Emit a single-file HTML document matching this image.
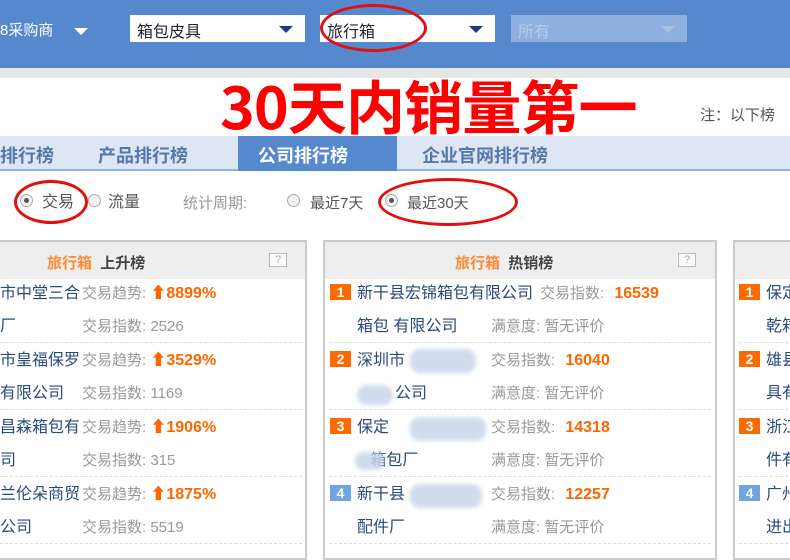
<!DOCTYPE html>
<html><head><meta charset="utf-8"><style>
*{margin:0;padding:0;box-sizing:border-box}
body{width:790px;height:547px;overflow:hidden;background:#fff;position:relative;font-family:"Liberation Sans","Noto Sans CJK SC",sans-serif;font-size:15px}
.a{position:absolute;white-space:nowrap}
.top{left:0;top:0;width:790px;height:68px;background:#5588cc}
.sel{height:27px;top:15px;background:#fff;color:#223;font-size:16px;padding:3px 0 0 7px}
.tri{position:absolute;right:12px;top:11px;border-left:7px solid transparent;border-right:7px solid transparent;border-top:7px solid #1a3a8a}
.ell{position:absolute;border:3px solid #e01010;border-radius:50%}
.rad{position:absolute;width:13px;height:13px;border:1px solid #aaa;border-radius:50%;background:#f2f2f2}
.rad.on:after{content:"";position:absolute;left:3px;top:3px;width:5px;height:5px;border-radius:50%;background:#555}
.panel{border:2px solid #ccc;top:240px;height:320px;background:#fff}
.ph{position:absolute;left:0;right:0;top:0;height:37px;background:#eee}
.q{position:absolute;width:18px;height:14px;border:1px solid #bbb;background:#fafafa;color:#aaa;font-size:11px;text-align:center;line-height:12px}
.dl{position:absolute;height:0;border-top:1px dashed #ddd}
.bl{color:#2a4a7a}.gr{color:#999}.or{color:#ff6600;font-weight:bold}
.bd{position:absolute;width:21px;height:16px;background:#ff6a00;color:#fff;font-weight:bold;font-size:14px;text-align:center;line-height:16px}
.bd.b{background:#6fa6e0}
.blur{position:absolute;background:#c8d6e8;border-radius:10px;opacity:.85;filter:blur(2px)}
</style></head><body>
<div class="a top"></div>
<div class="a" style="left:0;top:19px;color:#fff;font-size:15px">8采购商</div>
<div class="a" style="left:74px;top:28px;border-left:7px solid transparent;border-right:7px solid transparent;border-top:7px solid #fff"></div>
<div class="a sel" style="left:130px;width:175px">箱包皮具<div class="tri"></div></div>
<div class="a sel" style="left:320px;width:175px">旅行箱<div class="tri"></div></div>
<div class="a sel" style="left:511px;width:176px;background:#8fb0de;color:#b8cbe6">所有<div class="tri" style="border-top-color:#aac0e0"></div></div>
<div class="ell" style="left:320px;top:4px;width:107px;height:48px"></div>
<div class="a" style="left:0;top:68px;width:790px;height:10px;background:#e6e6e6"></div>
<div class="a" style="left:220px;top:74px;color:#ff0000;font-size:58px;line-height:60px;font-weight:bold;letter-spacing:-1px;font-family:'Noto Sans CJK SC','Liberation Sans',sans-serif;transform:scaleX(1.02);transform-origin:left top">30天内销量第一</div>
<div class="a" style="left:700px;top:104px;color:#555;font-size:15px">注：以下榜</div>
<div class="a" style="left:0;top:136px;width:790px;height:35px;background:#dde7f3;border-bottom:2px solid #8fb4df"></div>
<div class="a" style="left:238px;top:136px;width:159px;height:35px;background:#5588cc"></div>
<div class="a" style="left:0;top:142px;font-size:18px;font-weight:bold;color:#5577aa">排行榜</div>
<div class="a" style="left:98px;top:142px;font-size:18px;font-weight:bold;color:#5577aa">产品排行榜</div>
<div class="a" style="left:258px;top:142px;font-size:18px;font-weight:bold;color:#fff">公司排行榜</div>
<div class="a" style="left:422px;top:142px;font-size:18px;font-weight:bold;color:#5577aa">企业官网排行榜</div>
<span class="rad on" style="left:20px;top:194px"></span>
<div class="a" style="left:42px;top:188px;color:#555;font-size:16px">交易</div>
<span class="rad" style="left:88px;top:194px"></span>
<div class="a" style="left:108px;top:188px;color:#555;font-size:16px">流量</div>
<div class="a" style="left:183px;top:192px;color:#999">统计周期:</div>
<span class="rad" style="left:287px;top:194px"></span>
<div class="a" style="left:310px;top:192px;color:#555">最近7天</div>
<span class="rad on" style="left:385px;top:194px"></span>
<div class="a" style="left:407px;top:192px;color:#555">最近30天</div>
<div class="ell" style="left:14px;top:180px;width:74px;height:44px"></div>
<div class="ell" style="left:378px;top:178px;width:140px;height:48px"></div>

<div class="a panel" style="left:-10px;width:317px">
<div class="ph"></div>
<div class="a" style="left:55px;top:10px;font-weight:bold"><span style="color:#ff8833">旅行箱</span> <span style="color:#444;margin-left:4px">上升榜</span></div>
<div class="q" style="left:277px;top:11px">?</div>
</div>
<div class="a" style="left:0;top:277px;line-height:33px;font-size:16px">
<div class="bl">市中堂三合</div><div class="bl">厂</div>
<div class="bl" style="margin-top:1px">市皇福保罗</div><div class="bl">有限公司</div>
<div class="bl" style="margin-top:1px">昌森箱包有</div><div class="bl">司</div>
<div class="bl" style="margin-top:1px">兰伦朵商贸</div><div class="bl">公司</div>
</div>
<div class="a" style="left:82px;top:277px;line-height:33px">
<div><span class="gr">交易趋势: </span> <span class="or" style="font-size:16px">&#11014;8899%</span></div><div class="gr">交易指数: 2526</div>
<div style="margin-top:1px"><span class="gr">交易趋势: </span> <span class="or" style="font-size:16px">&#11014;3529%</span></div><div class="gr">交易指数: 1169</div>
<div style="margin-top:1px"><span class="gr">交易趋势: </span> <span class="or" style="font-size:16px">&#11014;1906%</span></div><div class="gr">交易指数: 315</div>
<div style="margin-top:1px"><span class="gr">交易趋势: </span> <span class="or" style="font-size:16px">&#11014;1875%</span></div><div class="gr">交易指数: 5519</div>
</div>
<div class="dl" style="left:0;width:302px;top:342px"></div>
<div class="dl" style="left:0;width:302px;top:409px"></div>
<div class="dl" style="left:0;width:302px;top:476px"></div>
<div class="dl" style="left:0;width:302px;top:543px"></div>

<div class="a panel" style="left:323px;width:394px">
<div class="ph"></div>
<div class="a" style="left:130px;top:10px;font-weight:bold"><span style="color:#ff8833">旅行箱</span> <span style="color:#444;margin-left:4px">热销榜</span></div>
<div class="q" style="left:353px;top:11px">?</div>
</div>
<div class="bd" style="left:330px;top:284px">1</div>
<div class="bd" style="left:330px;top:351px">2</div>
<div class="bd" style="left:330px;top:418px">3</div>
<div class="bd b" style="left:330px;top:485px">4</div>
<div class="a" style="left:357px;top:277px;line-height:33px;font-size:16px">
<div class="bl">新干县宏锦箱包有限公司</div><div class="bl">箱包 有限公司</div>
<div class="bl" style="margin-top:1px">深圳市</div><div class="bl">&nbsp;</div>
<div class="bl" style="margin-top:1px">保定</div><div class="bl">&nbsp;&nbsp;&nbsp;箱包厂</div>
<div class="bl" style="margin-top:1px">新干县</div><div class="bl">配件厂</div>
</div>
<div class="a bl" style="left:395px;top:377px;line-height:33px;font-size:16px">公司</div>
<div class="blur" style="left:410px;top:349px;width:66px;height:24px"></div>
<div class="blur" style="left:357px;top:385px;width:36px;height:20px"></div>
<div class="blur" style="left:410px;top:417px;width:76px;height:24px"></div>
<div class="blur" style="left:355px;top:452px;width:30px;height:18px"></div>
<div class="blur" style="left:410px;top:484px;width:72px;height:24px"></div>
<div class="a" style="left:540px;top:277px;line-height:33px">
<span class="gr">交易指数:</span> <span class="or" style="font-size:16px;margin-left:6px">16539</span>
</div>
<div class="a" style="left:491px;top:277px;line-height:33px">
<div>&nbsp;</div><div class="gr">满意度: 暂无评价</div>
<div style="margin-top:1px"><span class="gr">交易指数:</span> <span class="or" style="font-size:16px;margin-left:6px">16040</span></div><div class="gr">满意度: 暂无评价</div>
<div style="margin-top:1px"><span class="gr">交易指数:</span> <span class="or" style="font-size:16px;margin-left:6px">14318</span></div><div class="gr">满意度: 暂无评价</div>
<div style="margin-top:1px"><span class="gr">交易指数:</span> <span class="or" style="font-size:16px;margin-left:6px">12257</span></div><div class="gr">满意度: 暂无评价</div>
</div>
<div class="dl" style="left:329px;width:382px;top:342px"></div>
<div class="dl" style="left:329px;width:382px;top:409px"></div>
<div class="dl" style="left:329px;width:382px;top:476px"></div>
<div class="dl" style="left:329px;width:382px;top:543px"></div>

<div class="a panel" style="left:733px;width:100px"><div class="ph"></div></div>
<div class="bd" style="left:739px;top:284px">1</div>
<div class="bd" style="left:739px;top:351px">2</div>
<div class="bd" style="left:739px;top:418px">3</div>
<div class="bd b" style="left:739px;top:485px">4</div>
<div class="a" style="left:766px;top:277px;line-height:33px;font-size:16px">
<div class="bl">保定</div><div class="bl">乾箱</div>
<div class="bl" style="margin-top:1px">雄县</div><div class="bl">具有</div>
<div class="bl" style="margin-top:1px">浙江</div><div class="bl">件有</div>
<div class="bl" style="margin-top:1px">广州</div><div class="bl">进出</div>
</div>
<div class="dl" style="left:739px;width:60px;top:342px"></div>
<div class="dl" style="left:739px;width:60px;top:409px"></div>
<div class="dl" style="left:739px;width:60px;top:476px"></div>
<div class="dl" style="left:739px;width:60px;top:543px"></div>
</body></html>
